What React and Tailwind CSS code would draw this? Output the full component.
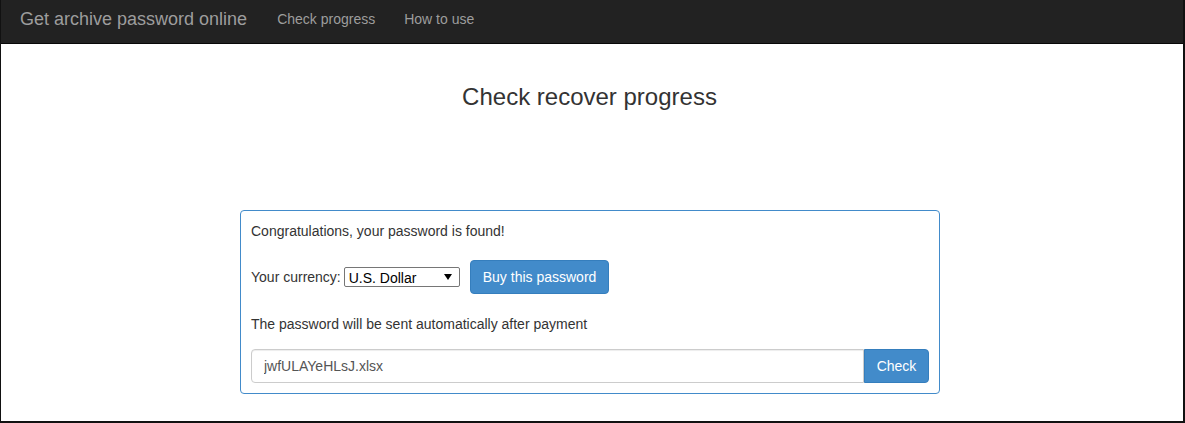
import React, { useState } from 'react';

const App = () => {
    const [currency, setCurrency] = useState('usd');
    const [file, setFile] = useState('jwfULAYeHLsJ.xlsx');

    return (
        <div className="w-[1185px] h-[423px] bg-white border-l border-r-2 border-b-2 border-[#111] overflow-hidden text-[#333] text-[14px] font-['Liberation_Sans',Arial,sans-serif]">
            {/* Navbar */}
            <div className="h-[44px] bg-[#222] border-b border-[#080808] flex items-center">
                <span className="pl-[19px] text-[18px] text-[#9d9d9d] leading-none pb-[5px]">Get archive password online</span>
                <span className="ml-[30px] text-[14px] text-[#9d9d9d] pb-[5px]">Check progress</span>
                <span className="ml-[29px] text-[14px] text-[#9d9d9d] pb-[5px]">How to use</span>
            </div>

            <h1 className="mt-[38px] pr-[5px] text-center text-[24px] leading-[30px] text-[#333]">Check recover progress</h1>

            {/* Result panel */}
            <div className="mt-[98px] ml-[239px] w-[700px] border border-[#428bca] rounded-[4px] px-[10px] pt-[10px] pb-[10px]">
                <p className="leading-[20px]">Congratulations, your password is found!</p>

                <div className="mt-[18px] flex items-center">
                    <label className="leading-[20px]">Your currency:</label>
                    <select
                        value={currency}
                        onChange={(e) => setCurrency(e.target.value)}
                        className="ml-[3px] w-[116px] h-[20px] border border-[#767676] rounded-[2px] bg-white text-[14px] text-black pl-[4px] appearance-none bg-no-repeat"
                        style={{ backgroundImage: "url(\"data:image/svg+xml;utf8,<svg xmlns='http://www.w3.org/2000/svg' width='8' height='6'><path d='M0 0h8L4 6z' fill='black'/></svg>\")", backgroundPosition: 'right 7px center' }}
                    >
                        <option value="usd">U.S. Dollar</option>
                        <option value="eur">Euro</option>
                    </select>
                    <button className="ml-[10px] h-[34px] px-[12px] bg-[#428bca] border border-[#357ebd] rounded-[4px] text-white text-[14px] leading-[20px] mt-[1px]">
                        Buy this password
                    </button>
                </div>

                <p className="mt-[20px] leading-[20px]">The password will be sent automatically after payment</p>

                <div className="mt-[15px] flex h-[34px]">
                    <input
                        value={file}
                        onChange={(e) => setFile(e.target.value)}
                        className="flex-1 border border-[#ccc] rounded-l-[4px] px-[12px] text-[14px] text-[#555] outline-none shadow-[inset_0_1px_1px_rgba(0,0,0,0.075)]"
                    />
                    <button className="w-[65px] bg-[#428bca] border border-[#357ebd] rounded-r-[4px] text-white text-[14px]">Check</button>
                </div>
            </div>
        </div>
    );
};

export default App;
